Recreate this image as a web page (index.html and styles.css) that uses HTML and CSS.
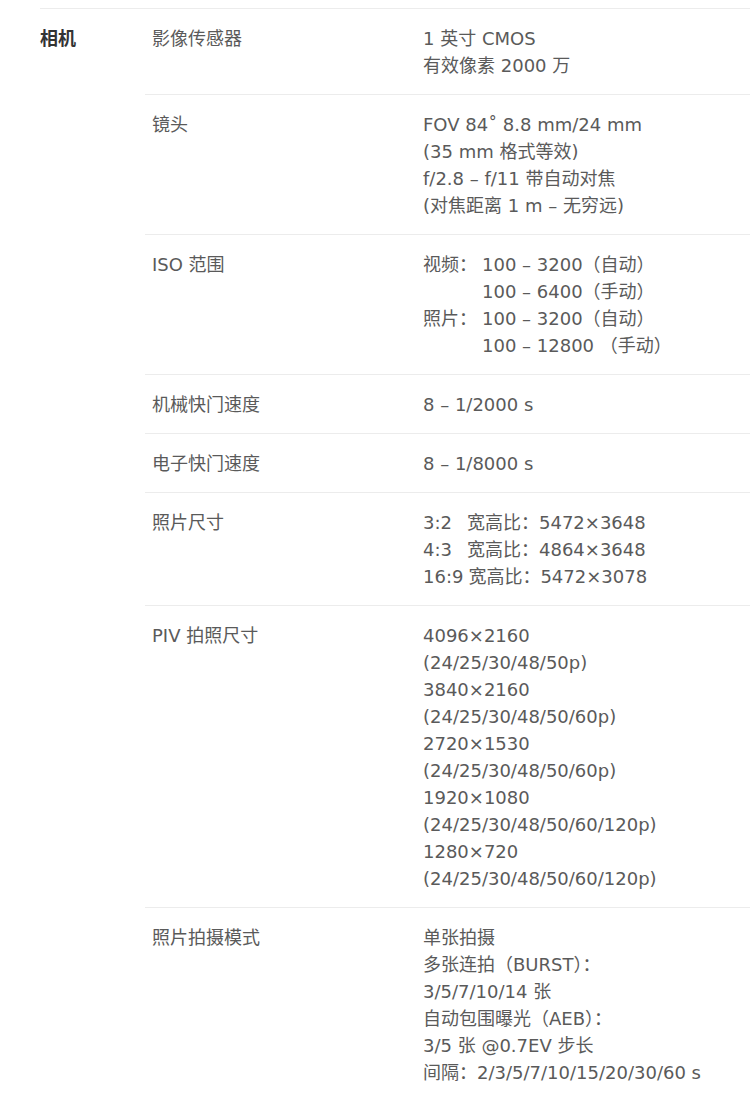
FILE: index.html
```html
<!DOCTYPE html>
<html lang="zh-CN">
<head>
<meta charset="utf-8">
<title>相机规格</title>
<link rel="stylesheet" href="styles.css">
</head>
<body>
<section class="spec">
  <h2 class="spec-title">相机</h2>
  <div class="spec-rows">
    <div class="row">
      <div class="label">影像传感器</div>
      <div class="value">1 英寸 CMOS<br>有效像素 2000 万</div>
    </div>
    <div class="row">
      <div class="label">镜头</div>
      <div class="value">FOV 84˚ 8.8 mm/24 mm<br>(35 mm 格式等效)<br>f/2.8 – f/11 带自动对焦<br>(对焦距离 1 m – 无穷远)</div>
    </div>
    <div class="row">
      <div class="label">ISO 范围</div>
      <div class="value iso">
        <span>视频：</span><span>100 – 3200（自动）</span>
        <span></span><span>100 – 6400（手动）</span>
        <span>照片：</span><span>100 – 3200（自动）</span>
        <span></span><span>100 – 12800 （手动）</span>
      </div>
    </div>
    <div class="row">
      <div class="label">机械快门速度</div>
      <div class="value">8 – 1/2000 s</div>
    </div>
    <div class="row">
      <div class="label">电子快门速度</div>
      <div class="value">8 – 1/8000 s</div>
    </div>
    <div class="row">
      <div class="label">照片尺寸</div>
      <div class="value">
        <div><span class="ratio">3:2</span>宽高比：5472×3648</div>
        <div><span class="ratio">4:3</span>宽高比：4864×3648</div>
        <div><span class="ratio">16:9</span>宽高比：5472×3078</div>
      </div>
    </div>
    <div class="row">
      <div class="label">PIV 拍照尺寸</div>
      <div class="value">4096×2160<br>(24/25/30/48/50p)<br>3840×2160<br>(24/25/30/48/50/60p)<br>2720×1530<br>(24/25/30/48/50/60p)<br>1920×1080<br>(24/25/30/48/50/60/120p)<br>1280×720<br>(24/25/30/48/50/60/120p)</div>
    </div>
    <div class="row">
      <div class="label">照片拍摄模式</div>
      <div class="value">单张拍摄<br>多张连拍（BURST）：<br>3/5/7/10/14 张<br>自动包围曝光（AEB）：<br>3/5 张 @0.7EV 步长<br>间隔：2/3/5/7/10/15/20/30/60 s</div>
    </div>
  </div>
</section>
</body>
</html>
```

FILE: styles.css
```css
html, body {
  margin: 0;
  padding: 0;
  background: #ffffff;
}

body {
  font-family: "DejaVu Sans", "Noto Sans CJK SC", sans-serif;
  font-size: 18px;
  line-height: 27px;
  color: #5a5a5a;
  overflow: hidden;
}

.spec {
  display: flex;
  margin: 8px 0 0 40px;
  border-top: 1px solid #ececec;
}

.spec-title {
  width: 105px;
  flex: none;
  margin: 0;
  padding-top: 15px;
  font-family: "Noto Sans CJK SC", sans-serif;
  font-size: 18px;
  line-height: 27px;
  font-weight: 700;
  color: #333333;
}

.spec-rows {
  flex: 1;
}

.row {
  display: flex;
  padding: 16px 0 15px 7px;
  border-top: 1px solid #ececec;
}

.row:first-child {
  border-top: none;
}

.label {
  width: 271px;
  flex: none;
}

.value {
  flex: 1;
  white-space: nowrap;
}

.iso {
  display: grid;
  grid-template-columns: 59px auto;
  justify-content: start;
}

.ratio {
  display: inline-block;
  min-width: 39px;
  margin-right: 5px;
}

.ratio:last-child {
  margin-right: 5px;
}
```
